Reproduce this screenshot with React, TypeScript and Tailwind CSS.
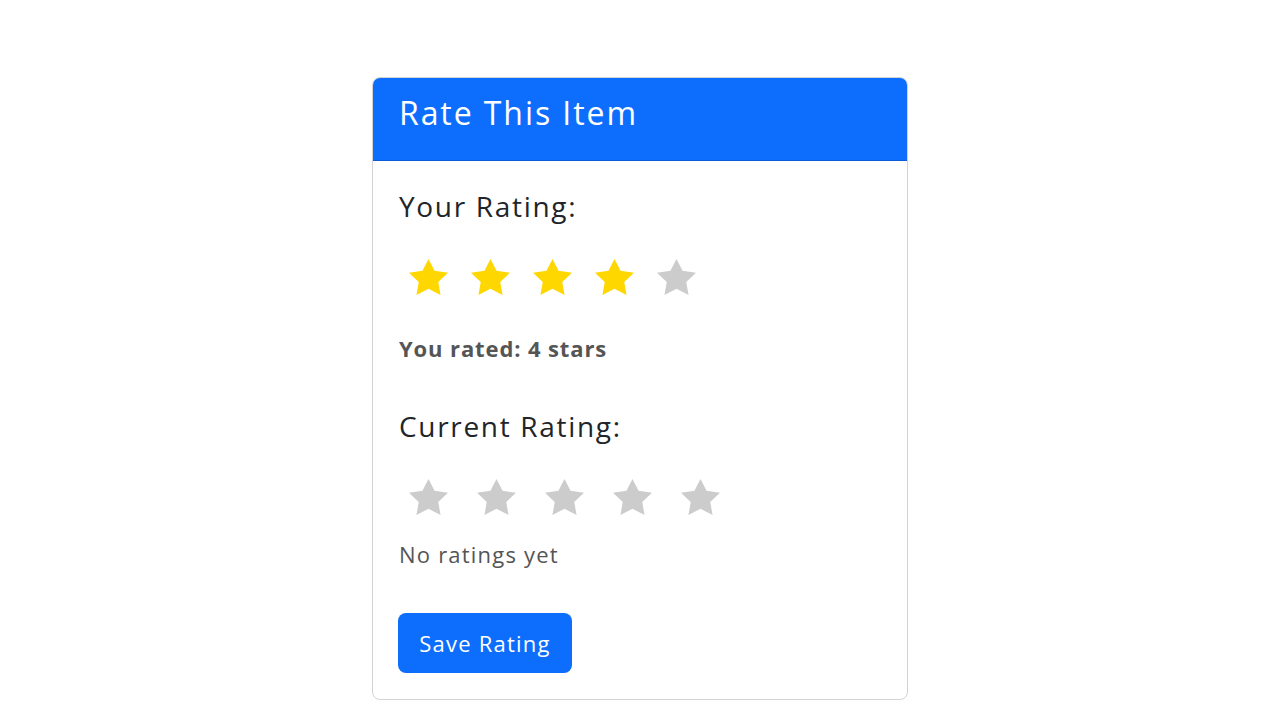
const FONT = "font-['Open_Sans',sans-serif]";

function Star({ filled }: { filled: boolean }) {
  return (
    <svg
      width="39"
      height="36"
      viewBox="2 2 20 19.02"
      preserveAspectRatio="none"
      className={filled ? "text-[#ffd700]" : "text-[#cccccc]"}
    >
      <polygon
        fill="currentColor"
        points="12,2 15.09,8.26 22,9.27 17,14.14 18.18,21.02 12,17.77 5.82,21.02 7,14.14 2,9.27 8.91,8.26"
      />
    </svg>
  );
}

function StarRow({ value, gap }: { value: number; gap: string }) {
  return (
    <div className={`flex pl-[10px] ${gap}`}>
      {[1, 2, 3, 4, 5].map((n) => (
        <Star key={n} filled={n <= value} />
      ))}
    </div>
  );
}

export default function App() {
  const yourRating = 4;

  return (
    <div className={`min-h-screen bg-white pt-[77px] ${FONT}`}>
      <div className="mx-auto w-[536px] overflow-hidden rounded-lg border border-[#d3d3d3]">
        <div className="flex h-[83px] items-center border-b border-black/15 bg-[#0d6efd] px-[26px] pb-[12px]">
          <h2 className="text-[32px] leading-none tracking-[0.06em] text-white">Rate This Item</h2>
        </div>

        <div className="px-[26px] pb-[26px] pt-[27px]">
          <h3 className="text-[28px] leading-[36px] tracking-[0.06em] text-[#212529]">
            Your Rating:
          </h3>
          <div className="mt-[35px]">
            <StarRow value={yourRating} gap="gap-[23px]" />
          </div>
          <p className="mt-[38px] text-[22px] font-bold leading-[30px] tracking-[0.04em] text-[#555555]">
            You rated: {yourRating} stars
          </p>

          <h3 className="mt-[45px] text-[28px] leading-[36px] tracking-[0.06em] text-[#212529]">
            Current Rating:
          </h3>
          <div className="mt-[35px]">
            <StarRow value={0} gap="gap-[29px]" />
          </div>
          <p className="mt-[24px] text-[22px] leading-[30px] tracking-[0.055em] text-[#555555]">
            No ratings yet
          </p>

          <button
            type="button"
            className="-ml-px mt-[44px] flex h-[60px] w-[174px] items-center justify-center rounded-lg bg-[#0d6efd] text-[22px] tracking-[0.055em] text-white"
          >
            Save Rating
          </button>
        </div>
      </div>
    </div>
  );
}
